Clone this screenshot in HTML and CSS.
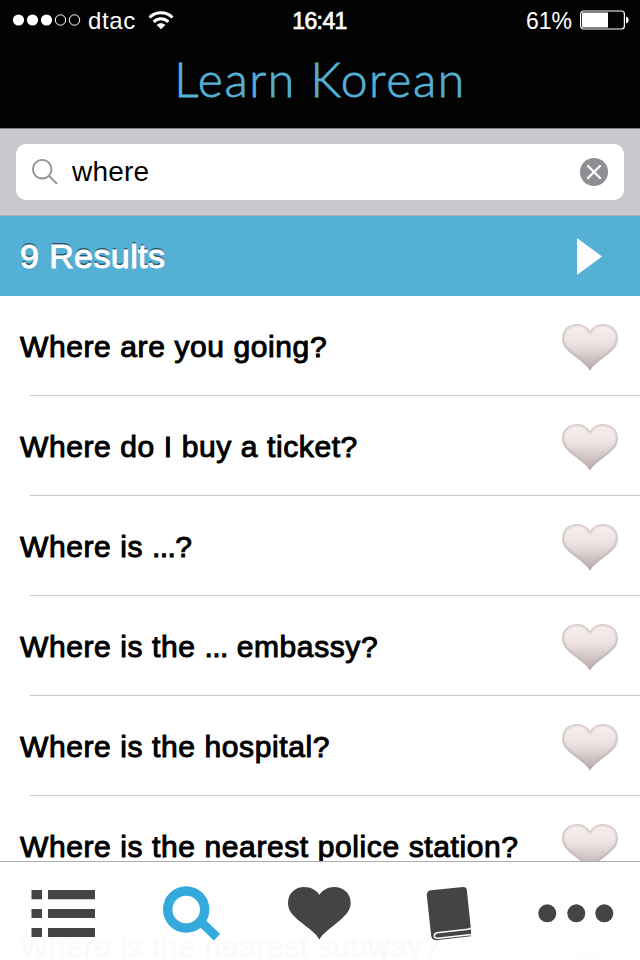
FILE: index.html
```html
<!DOCTYPE html>
<html lang="en">
  <head>
    <meta charset="utf-8">
    <title>Learn Korean</title>
    <link rel="stylesheet" href="styles.css">
  </head>
  <body>
    <svg class="defs" width="0" height="0">
      <defs>
        <linearGradient id="heart-fill" x1="0" y1="0" x2="0" y2="1">
          <stop offset="0" stop-color="#faf0f0" />
          <stop offset="0.4" stop-color="#eee3e3" />
          <stop offset="1" stop-color="#b8a9a9" />
        </linearGradient>
        <filter id="heart-blur"><feGaussianBlur stdDeviation="1.6" /></filter>
        <clipPath id="heart-clip">
          <path d="M28 46.500C25 41 18 36.500 11 31C4 25.500 0 21 0 14.500C0 5 7 0 15.500 0C21 0 26 3 28 7.500C30 3 35 0 40.500 0C49 0 56 5 56 14.500C56 21 52 25.500 45 31C38 36.500 31 41 28 46.500Z" />
        </clipPath>
        <symbol id="heart" viewBox="0 0 56 47">
          <g clip-path="url(#heart-clip)">
            <path fill="url(#heart-fill)" d="M0 0H56V47H0Z" />
            <path fill="none" stroke="#b3a5a5" stroke-width="2" filter="url(#heart-blur)" d="M28 46.500C25 41 18 36.500 11 31C4 25.500 0 21 0 14.500C0 5 7 0 15.500 0C21 0 26 3 28 7.500C30 3 35 0 40.500 0C49 0 56 5 56 14.500C56 21 52 25.500 45 31C38 36.500 31 41 28 46.500Z" />
          </g>
        </symbol>
      </defs>
    </svg>

    <div class="app">
      <header class="header">
        <div class="status-bar">
          <div class="status-left">
            <svg class="signal" width="68" height="12" viewBox="0 0 68 12">
              <g fill="#fff">
                <circle cx="5.500" cy="6" r="5.600" />
                <circle cx="19.500" cy="6" r="5.600" />
                <circle cx="33.500" cy="6" r="5.600" />
              </g>
              <g fill="none" stroke="#fff">
                <circle cx="47.500" cy="6" r="5.200" />
                <circle cx="61.500" cy="6" r="5.200" />
              </g>
            </svg>
            <span class="carrier">dtac</span>
            <svg class="wifi" width="26" height="19" viewBox="0 0 26 19">
              <g fill="none" stroke="#fff" stroke-width="3">
                <path d="M1.500 6.500C8 0.300 18 0.300 24.500 6.500" />
                <path d="M5.700 10.800C10 6.800 16 6.800 20.300 10.800" />
              </g>
              <path fill="#fff" d="M8.700 14C11 11.700 15 11.700 17.300 14L13 18.300Z" />
            </svg>
          </div>
          <span class="clock">16:41</span>
          <div class="status-right">
            <span class="percent">61%</span>
            <svg class="battery" width="49" height="20" viewBox="0 0 49 20">
              <rect x="0.600" y="1" width="43.800" height="18" rx="3" fill="none" stroke="#fff" stroke-width="1.200" />
              <path fill="#fff" d="M2 2.500H28V17.500H2ZM46 6.500C49.500 7 49.500 13 46 13.500Z" />
            </svg>
          </div>
        </div>
        <h1 class="title">Learn Korean</h1>
      </header>

      <div class="search-bar">
        <div class="search-field">
          <svg class="search-icon" width="26" height="26" viewBox="0 0 26 26">
            <g fill="none" stroke="#8e8e93" stroke-width="1.800">
              <circle cx="10.200" cy="10.200" r="9.300" />
              <path d="M17 17L25 24.800" />
            </g>
          </svg>
          <span class="search-text">where</span>
          <svg class="clear-icon" width="28" height="28" viewBox="0 0 28 28">
            <circle cx="14" cy="14" r="14" fill="#8e8e93" />
            <path d="M8 8L20 20M20 8L8 20" stroke="#fff" stroke-width="2.400" stroke-linecap="round" />
          </svg>
        </div>
      </div>

      <div class="results-bar">
        <h2 class="results-title">9 Results</h2>
        <svg class="play-icon" width="25" height="37" viewBox="0 0 25 37">
          <path fill="#fff" d="M0 0L25 18.500L0 37Z" />
        </svg>
      </div>

      <ul class="phrases">
        <li class="phrase"><span>Where are you going?</span><svg class="favorite"><use href="#heart" /></svg></li>
        <li class="phrase"><span>Where do I buy a ticket?</span><svg class="favorite"><use href="#heart" /></svg></li>
        <li class="phrase"><span>Where is <span class="blank">...</span>?</span><svg class="favorite"><use href="#heart" /></svg></li>
        <li class="phrase"><span>Where is the <span class="blank">...</span> embassy?</span><svg class="favorite"><use href="#heart" /></svg></li>
        <li class="phrase"><span>Where is the hospital?</span><svg class="favorite"><use href="#heart" /></svg></li>
        <li class="phrase"><span>Where is the nearest police station?</span><svg class="favorite"><use href="#heart" /></svg></li>
        <li class="phrase"><span>Where is the nearest subway?</span><svg class="favorite"><use href="#heart" /></svg></li>
      </ul>

      <nav class="tab-bar">
        <a class="tab">
          <svg viewBox="0 0 128 98">
            <path d="M31.500 28H42V37.300H31.500ZM48 28H95V37.300H48ZM31.500 47H42V56H31.500ZM48 47H95V56H48ZM31.500 66H42V75H31.500ZM48 66H95V75H48Z" />
          </svg>
        </a>
        <a class="tab active">
          <svg viewBox="128 0 128 98">
            <g fill="none" stroke="currentColor">
              <circle cx="186.200" cy="47.500" r="18.500" stroke-width="9.400" />
              <path d="M199.500 58.500L217 75.300" stroke-width="9" />
            </g>
          </svg>
        </a>
        <a class="tab">
          <svg viewBox="256 0 128 98">
            <path d="M319.300 77.500C316 71 308 66 300 59.500C292 53 288 48 288 41C288 31 295.500 25 304 25C311 25 317 28.500 319.300 33C322 28.500 328 25 334 25C343 25 350.700 31 350.700 41C350.700 48 346 53 338.500 59.500C331 66 323 71 319.300 77.500Z" />
          </svg>
        </a>
        <a class="tab">
          <svg viewBox="384 0 128 98">
            <path d="M431 28.300L463 25Q466.300 24.700 466.800 28L470.800 65.500Q471 68.500 471 71.500L470.800 74.300L436 78.200Q432 78 431.200 74L426.800 33.500Q426.500 29 431 28.300Z" />
            <path fill="none" stroke="#fff" stroke-width="1.500" d="M471.500 65.500Q470.500 67 468 67.300L437 70.800Q434 71.400 434.300 74.200Q434.800 76.600 438 76.300L471.500 72.600" />
          </svg>
        </a>
        <a class="tab">
          <svg viewBox="512 0 128 98">
            <circle cx="547.300" cy="51.300" r="9" />
            <circle cx="576.300" cy="51.300" r="9" />
            <circle cx="604.300" cy="51.300" r="9" />
          </svg>
        </a>
      </nav>
    </div>
  </body>
</html>
```

FILE: styles.css
```css
body {
  margin: 0;
  font-family: "Liberation Sans", Helvetica, Arial, sans-serif;
  color: #000;
  background: #fff;
}

.defs {
  position: absolute;
}

.app {
  position: relative;
  width: 640px;
  height: 960px;
  overflow: hidden;
}

svg {
  display: block;
  flex: none;
}

/* Header */
.header {
  height: 128px;
  background: #030303;
  color: #fff;
}

.status-bar {
  display: grid;
  grid-template-columns: 1fr auto 1fr;
  align-items: center;
  height: 40px;
  padding: 0 11px 0 13px;
  font-size: 24px;
}

.status-left,
.status-right {
  display: flex;
  align-items: center;
}

.status-right {
  justify-content: flex-end;
}

.carrier {
  margin: 2px 12px 0 7px;
  letter-spacing: 0.6px;
}

.clock {
  margin: 2px 3px 0 0;
  font-size: 23px;
  letter-spacing: -0.6px;
  -webkit-text-stroke: 0.7px #fff;
}

.percent {
  margin: 2px 8px 0 0;
  font-size: 23px;
}

.title {
  margin: 0;
  padding-top: 9px;
  font-family: Lato, sans-serif;
  font-size: 48px;
  font-weight: 300;
  line-height: 60px;
  letter-spacing: 1.6px;
  text-align: center;
  color: #55b0d5;
  -webkit-text-stroke: 0.8px #55b0d5;
}

/* Search */
.search-bar {
  box-sizing: border-box;
  height: 88px;
  padding: 15px 16px;
  background: #c9c8ce;
  border-top: 1px solid #828185;
  border-bottom: 1px solid #acb0b5;
}

.search-field {
  display: flex;
  align-items: center;
  height: 56px;
  padding: 0 16px;
  border-radius: 10px;
  background: #fff;
}

.search-text {
  flex: 1;
  margin-left: 14px;
  font-size: 28px;
  letter-spacing: 0.2px;
}

/* Results */
.results-bar {
  display: flex;
  align-items: center;
  justify-content: space-between;
  height: 80px;
  padding: 0 38px 0 20px;
  background: #55b0d5;
}

.results-title {
  margin: 0;
  font-size: 34px;
  font-weight: normal;
  letter-spacing: 0.4px;
  color: #fff;
  -webkit-text-stroke: 1px #fff;
  text-shadow: 0 -2px 0 #2b586b;
}

.phrases {
  margin: 0;
  padding: 0;
  list-style: none;
}

.phrase {
  display: flex;
  align-items: center;
  justify-content: space-between;
  height: 100px;
  padding: 0 22px 0 20px;
  font-size: 30px;
  letter-spacing: 0.6px;
  -webkit-text-stroke: 1px #000;
  background: linear-gradient(#c8c7cc, #c8c7cc) 30px 99px / 100% 1px no-repeat;
}

.phrase > span {
  margin-top: 2px;
}

.blank {
  letter-spacing: -0.6px;
}

.favorite {
  width: 56px;
  height: 47px;
  margin-top: 3px;
}

/* Tab bar sits over the scrolling list */
.tab-bar {
  position: absolute;
  left: 0;
  right: 0;
  bottom: 0;
  display: flex;
  height: 98px;
  border-top: 1px solid #acacac;
  background: rgba(255, 255, 255, 0.98);
}

.tab {
  flex: 1;
  color: #444;
  fill: currentColor;
}

.tab.active {
  color: #34aadc;
}
```
